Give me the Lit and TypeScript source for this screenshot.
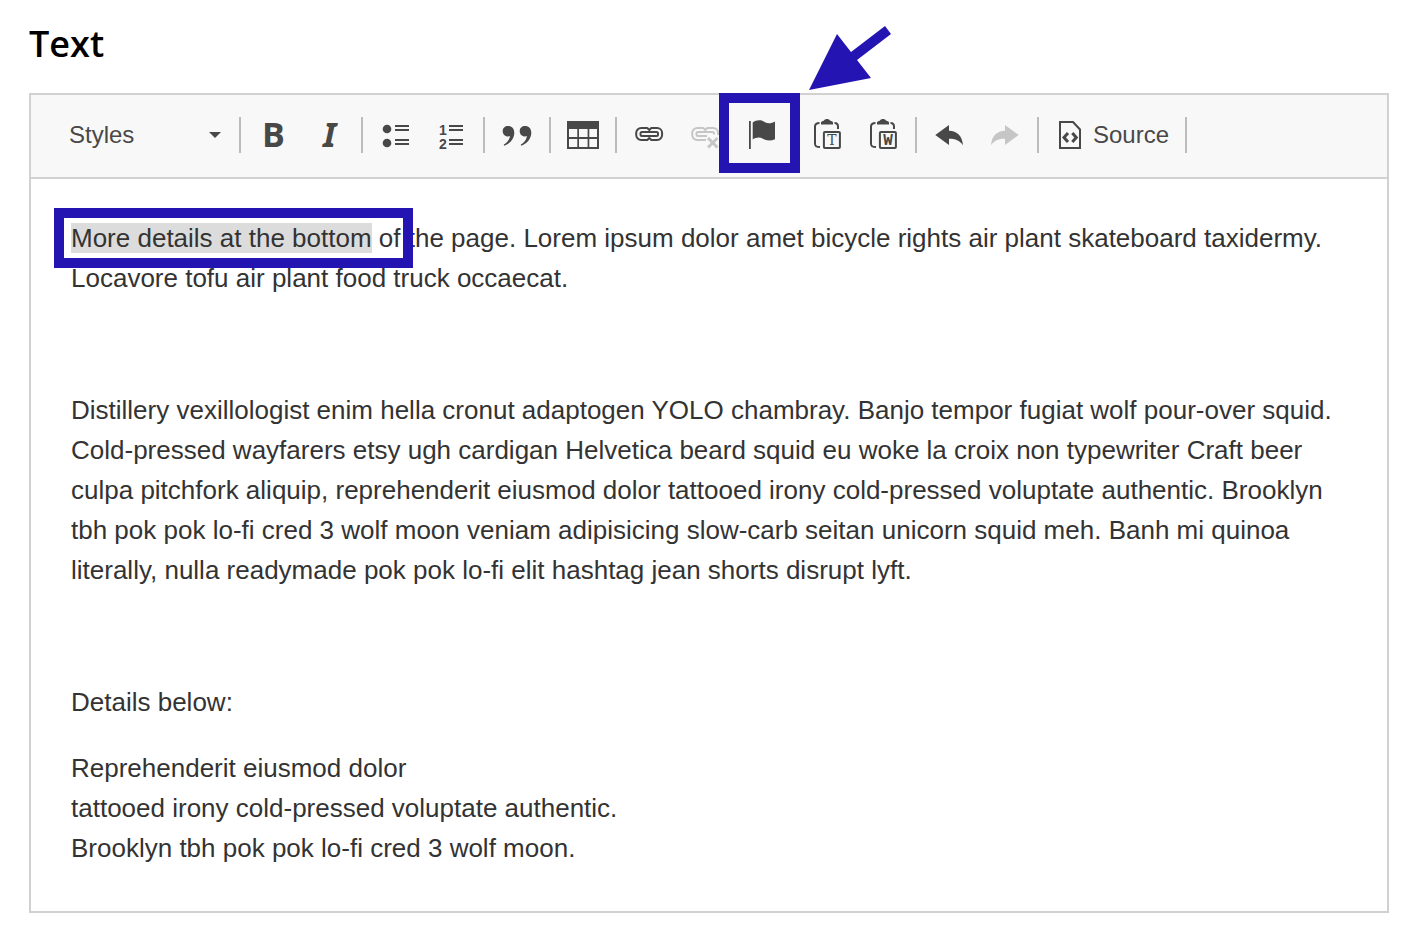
import { LitElement, html, css, svg, nothing, type TemplateResult } from "lit";
import { customElement } from "lit/decorators.js";

const glyph = (body: unknown) =>
  html`<svg class="icon" width="32" height="32" viewBox="0 0 32 32" aria-hidden="true">${body}</svg>`;

const clipboard = svg`
  <path d="M10 5.500V3.500C10 2 12 2.200 13 1.500c1-2 5-2 6 0 1 .7 3 .5 3 2v2z"/>
  <path class="line" d="M8.500 4C5 4 4 5 4 7.500v17C4 27 5 28 9 28M23.500 4c2.500 0 3.500 1 3.500 3.500V10"/>
  <rect class="line" x="12.900" y="13" width="16" height="16" rx="1"/>`;

const icons = {
  bold: glyph(svg`<text class="letter" x="5" y="28">B</text>`),
  italic: glyph(svg`<text class="letter slanted" x="10" y="28">I</text>`),
  bullets: glyph(svg`
    <circle cx="8" cy="10" r="4.300"/><circle cx="8" cy="24" r="4.300"/>
    <path d="M16 6h14v2H16zM16 10h14v2H16zM16 20h14v2H16zM16 24h14v2H16z"/>`),
  numbers: glyph(svg`
    <text class="digit" x="4" y="16">1</text><text class="digit" x="4" y="30">2</text>
    <path d="M14 6h14v2H14zM14 10h14v2H14zM14 20h14v2H14zM14 24h14v2H14z"/>`),
  quote: glyph(svg`
    <path d="M1.700 12c0-3 2.300-5 5.300-5 3.800 0 6.300 2.700 6.300 6.800 0 5.600-4 10.900-10 12.900l-.6-.9c3.500-1.800 5.800-4.900 6.200-8.700-.6.300-1.200.4-1.900.4-3 0-5.300-2.300-5.300-5.500z"/>
    <path d="M18.700 12c0-3 2.300-5 5.300-5 3.800 0 6.300 2.700 6.300 6.800 0 5.600-4 10.900-10 12.900l-.6-.9c3.500-1.800 5.800-4.900 6.200-8.700-.6.300-1.200.4-1.900.4-3 0-5.300-2.300-5.300-5.500z"/>`),
  table: glyph(svg`<path fill-rule="evenodd" d="M0 2h32v28H0zM2 10v8h8.300v-8zM12 10v8h8.600v-8zM22.300 10v8H30v-8zM2 20v8h8.300v-8zM12 20v8h8.600v-8zM22.300 20v8H30v-8z"/>`),
  link: glyph(svg`
    <path class="line" d="M16.300 11l-2-2H8.200a5 5 0 0 0-5 5v2a5 5 0 0 0 5 5h6.100l2-2 2 2h5.800a5 5 0 0 0 5-5v-2a5 5 0 0 0-5-5h-5.800z"/>
    <rect class="line" x="7.500" y="13" width="17.500" height="4" rx="1.500"/>`),
  unlink: glyph(svg`
    <path class="line" d="M17 21h-2.700H8.200a5 5 0 0 1-5-5v-2a5 5 0 0 1 5-5h6.100l2 2 2-2h5.800a5 5 0 0 1 5 5v2"/>
    <path class="line" d="M18 17H9a1.500 1.500 0 0 1-1.500-1.500v-1A1.500 1.500 0 0 1 9 13h14.500a1.500 1.500 0 0 1 1.500 1.500v1"/>
    <path class="line thick" d="M19 19l9.500 9.500M28.500 19L19 28.500"/>`),
  anchor: glyph(svg`<path d="M4 2h1.800v28H4zM7.700 3.500C11 1 16 .5 19.500 3c3.500 2 7 1.500 10.500-.5v17.700c-4.500 1.800-8.500 1.500-12-.5-3.500-1.800-7-1.300-10.300.8z"/>`),
  pasteText: glyph(svg`${clipboard}<text class="badge serif" x="21" y="26">T</text>`),
  pasteWord: glyph(svg`${clipboard}<text class="badge" x="21" y="26">W</text>`),
  undo: glyph(svg`<path d="M2.300 16L16 6v5.800c8 0 13.300 5.200 14 14.500-3.500-5-7.500-6.500-14-6.500V26z"/>`),
  redo: glyph(svg`<path d="M29.700 16L16 6v5.800c-8 0-13.300 5.200-14 14.500 3.500-5 7.500-6.500 14-6.500V26z"/>`),
  source: glyph(svg`
    <path class="line square" d="M5 3h13l7 7.500V29H5z"/>
    <path class="line thick square" d="M13 14l-4 4.500 4 4.500M17.300 14l4 4.500-4 4.500"/>`),
};

interface Tool {
  label: string;
  icon: TemplateResult;
  disabled?: boolean;
  text?: string;
  highlighted?: boolean;
}

const groups: Tool[][] = [
  [{ label: "Bold", icon: icons.bold }, { label: "Italic", icon: icons.italic }],
  [{ label: "Bulleted list", icon: icons.bullets }, { label: "Numbered list", icon: icons.numbers }],
  [{ label: "Block quote", icon: icons.quote }],
  [{ label: "Table", icon: icons.table }],
  [
    { label: "Link", icon: icons.link },
    { label: "Unlink", icon: icons.unlink, disabled: true },
    { label: "Anchor", icon: icons.anchor, highlighted: true },
  ],
  [{ label: "Paste as plain text", icon: icons.pasteText }, { label: "Paste from Word", icon: icons.pasteWord }],
  [{ label: "Undo", icon: icons.undo }, { label: "Redo", icon: icons.redo, disabled: true }],
  [{ label: "Source", icon: icons.source, text: "Source" }],
];

@customElement("editor-toolbar")
export class EditorToolbar extends LitElement {
  static styles = css`
    :host {
      display: flex;
      flex-wrap: wrap;
      align-items: center;
      padding: 12px 0 14px;
      background: #f8f8f8;
      border-bottom: 2px solid #d1d1d1;
      font: 24px/32px "Liberation Sans", Arial, sans-serif;
      color: #484848;
    }
    .styles {
      display: grid;
      grid-template-columns: 1fr;
      align-items: center;
      width: 152px;
      margin: 0 18px 0 38px;
    }
    .styles > * { grid-area: 1 / 1; }
    .styles select {
      appearance: none;
      border: 0;
      margin: 0;
      padding: 0;
      width: 100%;
      height: 56px;
      background: none;
      font: inherit;
      color: inherit;
    }
    .caret {
      justify-self: end;
      fill: #484848;
      pointer-events: none;
    }
    .group {
      display: flex;
      align-items: center;
      padding: 0 4px;
    }
    .rule {
      width: 2px;
      height: 36px;
      background: #bcbcbc;
    }
    .tool { position: relative; }
    button {
      display: flex;
      align-items: center;
      gap: 6px;
      height: 56px;
      padding: 0 12px;
      border: 0;
      background: none;
      font: inherit;
      color: inherit;
    }
    .icon {
      display: block;
      flex: none;
      fill: currentColor;
      overflow: visible;
    }
    button:disabled { color: #c6c6c6; }
    .line {
      fill: none;
      stroke: currentColor;
      stroke-width: 2;
      stroke-linejoin: round;
    }
    .thick { stroke-width: 3; }
    .square { stroke-linejoin: miter; }
    .letter { font: 700 34px "Open Sans", sans-serif; }
    .slanted { font-family: "Noto Sans", sans-serif; font-style: italic; }
    .digit { font: 700 14px "Liberation Sans", Arial, sans-serif; }
    .badge { font: 700 16px "Liberation Mono", monospace; text-anchor: middle; }
    .serif { font: 400 14px "DejaVu Serif", serif; }
    .frame {
      position: absolute;
      inset: -14px -11px -10px -14px;
      border: 10px solid #2415b2;
      pointer-events: none;
    }
    .arrow {
      position: absolute;
      left: 76px;
      top: -81px;
      fill: #2415b2;
      pointer-events: none;
    }
  `;

  private renderTool(tool: Tool) {
    return html`<div class="tool">
      <button type="button" aria-label=${tool.label} ?disabled=${tool.disabled}>${tool.icon}${tool.text ?? nothing}</button>
      ${tool.highlighted
        ? html`<div class="frame"></div>
            <svg class="arrow" width="82" height="64" viewBox="0 0 82 64" aria-hidden="true">
              <path d="M0 64L28 8l14 18L76 0l6 8-34 26 14 18z" />
            </svg>`
        : nothing}
    </div>`;
  }

  render() {
    return html`
      <div class="styles">
        <select aria-label="Styles"><option>Styles</option></select>
        <svg class="caret" width="12" height="6" viewBox="0 0 12 6" aria-hidden="true"><path d="M0 0h12L6 6z" /></svg>
      </div>
      <div class="rule"></div>
      ${groups.map((group) => html`<div class="group">${group.map((tool) => this.renderTool(tool))}</div><div class="rule"></div>`)}
    `;
  }
}

@customElement("app-root")
export class AppRoot extends LitElement {
  static styles = css`
    :host {
      display: block;
      padding: 20px 20px 21px 29px;
      background: #fff;
    }
    h1 {
      margin: 0 0 25px;
      font: 600 36px/48px "Open Sans", sans-serif;
      color: #000;
    }
    .editor { border: 2px solid #d1d1d1; }
    .body {
      padding: 39px 40px 17px;
      font: 26px/40px "Liberation Sans", Arial, sans-serif;
      color: #333;
      outline: none;
    }
    p { margin: 0 0 26px; }
    mark {
      position: relative;
      background: #dcdcdc;
      color: inherit;
    }
    .frame {
      position: absolute;
      inset: -15px -41px -15px -17px;
      border: 10px solid #2415b2;
      pointer-events: none;
    }
  `;

  render() {
    return html`
      <h1 id="field-label">Text</h1>
      <div class="editor">
        <editor-toolbar role="toolbar" aria-label="Formatting"></editor-toolbar>
        <div class="body" role="textbox" aria-multiline="true" aria-labelledby="field-label" contenteditable="true" spellcheck="false">
          <p><mark>More details at the bottom<span class="frame"></span></mark> of the page. Lorem ipsum dolor amet bicycle rights air plant skateboard taxidermy. Locavore tofu air plant food truck occaecat.</p>
          <p>&nbsp;</p>
          <p>Distillery vexillologist enim hella cronut adaptogen YOLO chambray. Banjo tempor fugiat wolf pour-over squid. Cold-pressed wayfarers etsy ugh cardigan Helvetica beard squid eu woke la croix non typewriter Craft beer culpa pitchfork aliquip, reprehenderit eiusmod dolor tattooed irony cold-pressed voluptate authentic. Brooklyn tbh pok pok lo-fi cred 3 wolf moon veniam adipisicing slow-carb seitan unicorn squid meh. Banh mi quinoa literally, nulla readymade pok pok lo-fi elit hashtag jean shorts disrupt lyft.</p>
          <p>&nbsp;</p>
          <p>Details below:</p>
          <p>Reprehenderit eiusmod dolor<br>tattooed irony cold-pressed voluptate authentic.<br>Brooklyn tbh pok pok lo-fi cred 3 wolf moon.</p>
        </div>
      </div>
    `;
  }
}
